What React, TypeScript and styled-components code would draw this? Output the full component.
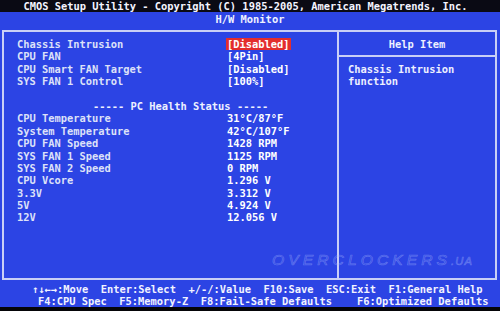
import React from "react";
import styled, { createGlobalStyle } from "styled-components";

const GlobalStyle = createGlobalStyle`
  html, body {
    margin: 0;
    padding: 0;
    background: #050508;
    width: 500px;
    height: 311px;
    overflow: hidden;
  }
`;

const Screen = styled.div`
  width: 500px;
  height: 307px;
  overflow: hidden;
  background: #2c44e4;
  display: flex;
  flex-direction: column;
  font-family: "DejaVu Sans Mono", "Liberation Mono", monospace;
  font-weight: bold;
  font-size: 10.4px;
  line-height: 12.4px;
  color: #e4e7fa;
  white-space: pre;
`;

const TitleBar = styled.div`
  height: 12px;
  line-height: 12px;
  background: #0a0a14;
  color: #f4f4ff;
  text-align: center;
  padding-right: 9px;
`;

const SubTitle = styled.div`
  height: 12.4px;
  padding-top: 1px;
  text-align: center;
  color: #f0f2ff;
`;

const Frame = styled.div`
  position: relative;
  margin: 4.6px 3px 0 2px;
  height: 248px;
  border: 2px solid #c9cff6;
  display: grid;
  grid-template-columns: 335px 1fr;
`;

const LeftPanel = styled.div`
  border-right: 2px solid #c9cff6;
  padding: 6px 0 0 13px;
  display: flex;
  flex-direction: column;
`;

const Row = styled.div`
  display: grid;
  grid-template-columns: 210px auto;
  height: 12.4px;
`;

const Label = styled.span`
  color: #dde1f8;
`;

const Value = styled.span<{ $selected?: boolean }>`
  justify-self: start;
  padding: 0 1px;
  margin-left: -1px;
  color: #ffffff;
  background: ${(p) => (p.$selected ? "#e32d2d" : "transparent")};
`;

const Blank = styled.div`
  height: 12.4px;
`;

const SectionHeading = styled.div`
  height: 12.4px;
  padding-left: 76px;
  color: #eef0ff;
`;

const RightPanel = styled.div`
  display: flex;
  flex-direction: column;
`;

const HelpHeader = styled.div`
  height: 23px;
  line-height: 25px;
  border-bottom: 2px solid #c9cff6;
  text-align: center;
  color: #eef0ff;
`;

const HelpText = styled.div`
  padding: 6px 0 0 9px;
  color: #eef0ff;
`;

const Watermark = styled.div`
  position: absolute;
  left: 268px;
  top: 222px;
  font-family: "Liberation Sans", Arial, sans-serif;
  font-style: italic;
  font-weight: normal;
  font-size: 14px;
  letter-spacing: 3.6px;
  color: rgba(120, 140, 255, 0.08);
  -webkit-text-stroke: 0.6px rgba(180, 192, 255, 0.4);
  transform: scaleX(1.12);
  transform-origin: left center;
`;

const SmallMark = styled.span`
  font-size: 10px;
  letter-spacing: 1px;
`;

const Legend = styled.div`
  margin-top: 3px;
  display: flex;
  flex-direction: column;
  color: #f2f3ff;
`;

const LegendRow = styled.div<{ $indent: number }>`
  height: 12px;
  line-height: 12px;
  padding-left: ${(p) => p.$indent}px;
`;

const settings = [
  { label: "Chassis Intrusion", value: "[Disabled]", selected: true },
  { label: "CPU FAN", value: "[4Pin]" },
  { label: "CPU Smart FAN Target", value: "[Disabled]" },
  { label: "SYS FAN 1 Control", value: "[100%]" },
];

const health = [
  ["CPU Temperature", "31°C/87°F"],
  ["System Temperature", "42°C/107°F"],
  ["CPU FAN Speed", "1428 RPM"],
  ["SYS FAN 1 Speed", "1125 RPM"],
  ["SYS FAN 2 Speed", "0 RPM"],
  ["CPU Vcore", "1.296 V"],
  ["3.3V", "3.312 V"],
  ["5V", "4.924 V"],
  ["12V", "12.056 V"],
];

const App = () => {
  return (
    <>
      <GlobalStyle />
      <Screen>
        <TitleBar>CMOS Setup Utility - Copyright (C) 1985-2005, American Megatrends, Inc.</TitleBar>
        <SubTitle>H/W Monitor</SubTitle>
        <Frame>
          <LeftPanel>
            {settings.map((s) => (
              <Row key={s.label}>
                <Label>{s.label}</Label>
                <Value $selected={s.selected}>{s.value}</Value>
              </Row>
            ))}
            <Blank />
            <SectionHeading>----- PC Health Status -----</SectionHeading>
            {health.map(([label, value]) => (
              <Row key={label}>
                <Label>{label}</Label>
                <Value>{value}</Value>
              </Row>
            ))}
          </LeftPanel>
          <RightPanel>
            <HelpHeader>Help Item</HelpHeader>
            <HelpText>
              {"Chassis Intrusion\nfunction"}
            </HelpText>
          </RightPanel>
          <Watermark>
            OVERCLOCKERS<SmallMark>.UA</SmallMark>
          </Watermark>
        </Frame>
        <Legend>
          <LegendRow $indent={32}>↑↓←→:Move  Enter:Select  +/-/:Value  F10:Save  ESC:Exit  F1:General Help</LegendRow>
          <LegendRow $indent={38}>F4:CPU Spec  F5:Memory-Z  F8:Fail-Safe Defaults    F6:Optimized Defaults</LegendRow>
        </Legend>
      </Screen>
    </>
  );
};

export default App;
